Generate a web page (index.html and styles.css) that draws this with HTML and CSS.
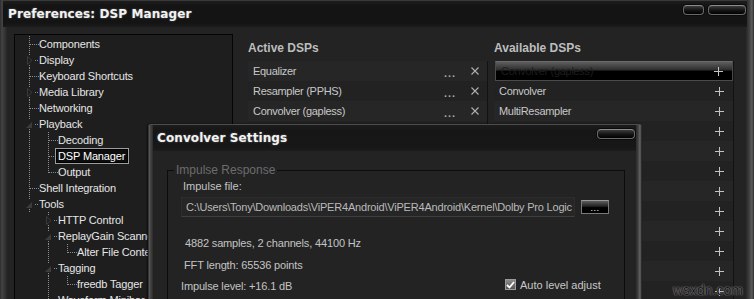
FILE: index.html
```html
<!DOCTYPE html>
<html lang="en">
<head>
  <meta charset="UTF-8">
  <title>Preferences: DSP Manager</title>
  <link rel="stylesheet" href="styles.css">
</head>
<body>
  <div class="window">
    <div class="titlebar">
      <span class="title">Preferences: DSP Manager</span>
      <div class="caption-buttons">
        <span class="cap-btn small"></span>
        <span class="cap-btn wide"></span>
      </div>
    </div>

    <div class="main">
      <div class="tree">
        <div class="node"><span class="g t"></span><span class="label">Components</span></div>
        <div class="node"><span class="g x"><svg class="closed" width="6" height="9" viewBox="0 0 6 9"><path d="M0.5 0.5L5 4.5L0.5 8.5Z" fill="none" stroke="#3a3a3a"/></svg></span><span class="label">Display</span></div>
        <div class="node"><span class="g t"></span><span class="label">Keyboard Shortcuts</span></div>
        <div class="node"><span class="g x"><svg class="closed" width="6" height="9" viewBox="0 0 6 9"><path d="M0.5 0.5L5 4.5L0.5 8.5Z" fill="none" stroke="#3a3a3a"/></svg></span><span class="label">Media Library</span></div>
        <div class="node"><span class="g t"></span><span class="label">Networking</span></div>
        <div class="node"><span class="g x"><svg class="open" width="6" height="6" viewBox="0 0 6 6"><path d="M6 0V6H0Z" fill="#3c3c3c"/></svg></span><span class="label">Playback</span></div>
        <div class="node"><span class="g v"></span><span class="g t"></span><span class="label">Decoding</span></div>
        <div class="node"><span class="g v"></span><span class="g t"></span><span class="label selected">DSP Manager</span></div>
        <div class="node"><span class="g v"></span><span class="g l"></span><span class="label">Output</span></div>
        <div class="node"><span class="g t"></span><span class="label">Shell Integration</span></div>
        <div class="node"><span class="g x"><svg class="open" width="6" height="6" viewBox="0 0 6 6"><path d="M6 0V6H0Z" fill="#3c3c3c"/></svg></span><span class="label">Tools</span></div>
        <div class="node"><span class="g"></span><span class="g x"><svg class="closed" width="6" height="9" viewBox="0 0 6 9"><path d="M0.5 0.5L5 4.5L0.5 8.5Z" fill="none" stroke="#3a3a3a"/></svg></span><span class="label">HTTP Control</span></div>
        <div class="node"><span class="g"></span><span class="g x"><svg class="open" width="6" height="6" viewBox="0 0 6 6"><path d="M6 0V6H0Z" fill="#3c3c3c"/></svg></span><span class="label">ReplayGain Scanner</span></div>
        <div class="node"><span class="g"></span><span class="g v"></span><span class="g l"></span><span class="label">Alter File Content</span></div>
        <div class="node"><span class="g"></span><span class="g x"><svg class="open" width="6" height="6" viewBox="0 0 6 6"><path d="M6 0V6H0Z" fill="#3c3c3c"/></svg></span><span class="label">Tagging</span></div>
        <div class="node"><span class="g"></span><span class="g v"></span><span class="g l"></span><span class="label">freedb Tagger</span></div>
        <div class="node"><span class="g"></span><span class="g t"></span><span class="label">Waveform Minibar</span></div>
      </div>

      <div class="dsp-panel">
        <div class="dsp-col">
          <h3>Active DSPs</h3>
          <div class="dsp-list">
            <div class="dsp-row"><span class="name">Equalizer</span><span class="dots">...</span><span class="remove"><svg width="8" height="8" viewBox="0 0 8 8"><path d="M0.5 0.5L7.5 7.5M7.5 0.5L0.5 7.5" stroke="#b0b0b0" stroke-width="1.1"/></svg></span></div>
            <div class="dsp-row"><span class="name">Resampler (PPHS)</span><span class="dots">...</span><span class="remove"><svg width="8" height="8" viewBox="0 0 8 8"><path d="M0.5 0.5L7.5 7.5M7.5 0.5L0.5 7.5" stroke="#b0b0b0" stroke-width="1.1"/></svg></span></div>
            <div class="dsp-row"><span class="name">Convolver (gapless)</span><span class="dots">...</span><span class="remove"><svg width="8" height="8" viewBox="0 0 8 8"><path d="M0.5 0.5L7.5 7.5M7.5 0.5L0.5 7.5" stroke="#b0b0b0" stroke-width="1.1"/></svg></span></div>
          </div>
        </div>
        <div class="dsp-col">
          <h3>Available DSPs</h3>
          <div class="dsp-list">
            <div class="dsp-row selected"><span class="name">Convolver (gapless)</span><span class="add"><svg width="9" height="9" viewBox="0 0 9 9"><path d="M4.5 0V9M0 4.5H9" stroke="#c4c4c4"/></svg></span></div>
            <div class="dsp-row"><span class="name">Convolver</span><span class="add"><svg width="9" height="9" viewBox="0 0 9 9"><path d="M4.5 0V9M0 4.5H9" stroke="#c4c4c4"/></svg></span></div>
            <div class="dsp-row"><span class="name">MultiResampler</span><span class="add"><svg width="9" height="9" viewBox="0 0 9 9"><path d="M4.5 0V9M0 4.5H9" stroke="#c4c4c4"/></svg></span></div>
            <div class="dsp-row"><span class="name"></span><span class="add"><svg width="9" height="9" viewBox="0 0 9 9"><path d="M4.5 0V9M0 4.5H9" stroke="#c4c4c4"/></svg></span></div>
            <div class="dsp-row"><span class="name"></span><span class="add"><svg width="9" height="9" viewBox="0 0 9 9"><path d="M4.5 0V9M0 4.5H9" stroke="#c4c4c4"/></svg></span></div>
            <div class="dsp-row"><span class="name"></span><span class="add"><svg width="9" height="9" viewBox="0 0 9 9"><path d="M4.5 0V9M0 4.5H9" stroke="#c4c4c4"/></svg></span></div>
            <div class="dsp-row"><span class="name"></span><span class="add"><svg width="9" height="9" viewBox="0 0 9 9"><path d="M4.5 0V9M0 4.5H9" stroke="#c4c4c4"/></svg></span></div>
            <div class="dsp-row"><span class="name"></span><span class="add"><svg width="9" height="9" viewBox="0 0 9 9"><path d="M4.5 0V9M0 4.5H9" stroke="#c4c4c4"/></svg></span></div>
            <div class="dsp-row"><span class="name"></span><span class="add"><svg width="9" height="9" viewBox="0 0 9 9"><path d="M4.5 0V9M0 4.5H9" stroke="#c4c4c4"/></svg></span></div>
            <div class="dsp-row"><span class="name"></span><span class="add"><svg width="9" height="9" viewBox="0 0 9 9"><path d="M4.5 0V9M0 4.5H9" stroke="#c4c4c4"/></svg></span></div>
            <div class="dsp-row"><span class="name"></span><span class="add"><svg width="9" height="9" viewBox="0 0 9 9"><path d="M4.5 0V9M0 4.5H9" stroke="#c4c4c4"/></svg></span></div>
            <div class="dsp-row"><span class="name"></span><span class="add"><svg width="9" height="9" viewBox="0 0 9 9"><path d="M4.5 0V9M0 4.5H9" stroke="#c4c4c4"/></svg></span></div>
          </div>
        </div>
      </div>
    </div>
  </div>

  <!-- floating settings dialog -->
  <div class="dialog">
    <div class="dialog-title">
      <span class="title">Convolver Settings</span>
      <span class="cap-btn wide"></span>
    </div>
    <div class="dialog-body">
      <fieldset class="group">
        <legend>Impulse Response</legend>
        <div class="field-label">Impulse file:</div>
        <div class="path-row">
          <div class="path-box">C:\Users\Tony\Downloads\ViPER4Android\ViPER4Android\Kernel\Dolby Pro Logic</div>
          <span class="browse">...</span>
        </div>
        <div class="info samples">4882 samples, 2 channels, 44100 Hz</div>
        <div class="info fft">FFT length: 65536 points</div>
        <div class="level-row">
          <span class="info level">Impulse level: +16.1 dB</span>
          <label class="check">
            <span class="box"><svg width="9" height="8" viewBox="0 0 9 8"><path d="M1 4L3.5 6.5L8 1" fill="none" stroke="#fff" stroke-width="1.8"/></svg></span>
            Auto level adjust
          </label>
        </div>
      </fieldset>
    </div>
  </div>

  <div class="watermark">wsxdn.com</div>
</body>
</html>
```

FILE: styles.css
```css
* { box-sizing: border-box; }

:root {
  --dv: repeating-linear-gradient(to bottom, #8c8c8c 0 1px, transparent 1px 2px);
  --dh: repeating-linear-gradient(to right, #8c8c8c 0 1px, transparent 1px 2px);
}

body {
  margin: 0;
  width: 754px;
  height: 299px;
  overflow: hidden;
  position: relative;
  background: #232323;
  font-family: "Liberation Sans", Arial, sans-serif;
  font-size: 11px;
  color: #d8d8d8;
}

.window {
  height: 299px;
  display: flex;
  flex-direction: column;
  background:
    linear-gradient(to right, #2c2c2c, #444 2px, #323232 5px, #262626 7px) left top / 7px 100% no-repeat,
    linear-gradient(to left, #2a2a2a, #5c5c5c 2px, #3c3c3c 5px, #272727 8px) right top / 8px 100% no-repeat,
    #232323;
}

.titlebar {
  flex: none;
  height: 27px;
  margin: 0 7px 0 3px;
  padding: 0 1px 0 5px;
  border-top: 1px solid #3a3a3a;
  background: linear-gradient(#1d1d1d, #141414 5px, #141414 22px, #1b1b1b);
  display: flex;
  justify-content: space-between;
  align-items: flex-start;
}

.title {
  font-family: "DejaVu Sans", sans-serif;
  font-weight: bold;
  font-size: 12px;
  line-height: 16px;
  padding-top: 5px;
  color: #f2f2f2;
  text-shadow: 0 0 2px rgba(255, 255, 255, 0.35);
  letter-spacing: 0.1px;
}

.caption-buttons {
  display: flex;
  gap: 4px;
  margin-top: 4px;
}

.cap-btn {
  display: block;
  height: 10px;
  border: 1px solid #6a6a6a;
  border-top-color: #8c8c8c;
  border-radius: 4px;
  background: linear-gradient(#3c3c3c, #161616 50%, #000);
  box-shadow: 0 0 0 1px #0b0b0b;
}
.cap-btn.small { width: 21px; }
.cap-btn.wide { width: 38px; }

.main {
  flex: 1;
  display: flex;
  padding: 7px 0 0 14px;
  min-height: 0;
}

/* preferences tree */
.tree {
  width: 219px;
  flex: none;
  border: 1px solid #050505;
  border-bottom: none;
  background: #1e1e1e;
  padding: 1px 0 0 5px;
  overflow: hidden;
  color: #e6e6e6;
  letter-spacing: -0.15px;
}

.node {
  display: flex;
  height: 16px;
  align-items: center;
}

.g {
  width: 19px;
  height: 16px;
  flex: none;
  display: flex;
  align-items: center;
  background-repeat: no-repeat;
}
.g.v {
  background-image: var(--dv);
  background-size: 1px 16px;
  background-position: 9px 0;
}
.g.t {
  background-image: var(--dv), var(--dh);
  background-size: 1px 16px, 9px 1px;
  background-position: 9px 0, 10px 8px;
}
.g.l {
  background-image: var(--dv), var(--dh);
  background-size: 1px 9px, 9px 1px;
  background-position: 9px 0, 10px 8px;
}
.g.x {
  background-image: var(--dv), var(--dv), var(--dh);
  background-size: 1px 3px, 1px 3px, 3px 1px;
  background-position: 9px 0, 9px 13px, 15px 8px;
}
.g .closed { margin-left: 7px; }
.g .open { margin-left: 6px; margin-top: 1px; }

.label {
  line-height: 16px;
  white-space: nowrap;
}
.label.selected {
  margin-left: -3px;
  padding: 0 3px 0 2px;
  line-height: 14px;
  height: 16px;
  border: 1px solid #9c9c9c;
  background: #0d0d0d;
  box-shadow: inset 0 0 0 1px #000;
  color: #fff;
}

/* DSP lists */
.dsp-panel {
  flex: 1;
  display: flex;
  gap: 6px;
  margin-left: 15px;
  padding-top: 7px;
}

.dsp-col {
  width: 240px;
  display: flex;
  flex-direction: column;
}

.dsp-col h3 {
  margin: 0 0 6px;
  font-size: 12px;
  line-height: 14px;
  color: #bdbdbd;
}

.dsp-list {
  flex: 1;
  border-right: 1px solid #121212;
  background: #222;
}

.dsp-row {
  height: 20px;
  display: flex;
  align-items: center;
  padding: 0 8px 0 5px;
  color: #c8c8c8;
  letter-spacing: -0.3px;
  white-space: nowrap;
}
.dsp-row:nth-child(odd) { background: #262626; }

.dsp-row .name { flex: 1; overflow: hidden; }

.dots {
  width: 12px;
  margin-right: 15px;
  color: #a8a8a8;
  font-weight: bold;
  letter-spacing: 1px;
  line-height: 11px;
  padding-top: 5px;
}
.remove svg, .add svg { display: block; }

.dsp-row .add { margin-right: 1px; }

.dsp-row.selected {
  margin-left: 1px;
  border: 1px solid #4a4a4a;
  border-top-color: #6a6a6a;
  background: linear-gradient(#5e5e5e, #2c2c2c 45%, #000 50%, #000);
  color: #1e1e1e;
}

/* Convolver settings dialog */
.dialog {
  position: absolute;
  left: 148px;
  top: 124px;
  width: 494px;
  display: flex;
  flex-direction: column;
  border-top: 1px solid #4c4c4c;
  border-radius: 3px 3px 0 0;
  background:
    linear-gradient(to right, #111, #5a5a5a 1px, #3e3e3e 3px, #2a2a2a 5px) left top / 5px 100% no-repeat,
    linear-gradient(to left, #1a1a1a, #666 2px, #3e3e3e 4px, #2a2a2a 6px) right top / 6px 100% no-repeat,
    #232323;
  box-shadow: -1px 0 2px rgba(0, 0, 0, 0.6);
}

.dialog-title {
  flex: none;
  height: 26px;
  margin: 0 6px 0 5px;
  padding: 0 1px 0 4px;
  display: flex;
  justify-content: space-between;
  align-items: flex-start;
  background: linear-gradient(#1c1c1c, #161616 6px, #171717 22px, #1c1c1c);
}
.dialog-title .cap-btn { margin-top: 4px; }

.dialog-body {
  padding: 12px 17px 0 19px;
}

.group {
  margin: 0;
  height: 150px;
  border: 1px solid #0c0c0c;
  padding: 0 0 0 13px;
  min-width: 0;
  color: #c4c4c4;
}

.group legend {
  margin-left: -7px;
  padding: 0 2px;
  font-size: 12px;
  line-height: 15px;
  color: #6c6c6c;
}

.field-label {
  line-height: 14px;
  margin: 1px 0 0 2px;
}

.path-row {
  display: flex;
  align-items: center;
  margin-top: 4px;
}

.path-box {
  width: 394px;
  height: 20px;
  line-height: 18px;
  padding-left: 4px;
  border: 1px solid #2c2c2c;
  border-bottom-color: #3e3e3e;
  background: #262626;
  color: #bababa;
  white-space: nowrap;
  overflow: hidden;
  letter-spacing: -0.2px;
}

.browse {
  width: 28px;
  height: 14px;
  margin-left: 6px;
  border: 1px solid #7a7a7a;
  border-top-color: #9a9a9a;
  background: linear-gradient(#5e5e5e, #202020 45%, #000 55%, #000);
  color: #fff;
  font-size: 9px;
  line-height: 14px;
  text-align: center;
  letter-spacing: 0.5px;
}

.info {
  line-height: 14px;
  letter-spacing: -0.15px;
}
.samples { margin: 19px 0 0 4px; }
.fft { margin: 8px 0 0 3px; }

.level-row {
  display: grid;
  grid-template-columns: 324px auto;
  margin-top: 7px;
}

.check {
  display: flex;
  align-items: center;
  gap: 4px;
  margin-top: -3px;
  line-height: 14px;
  color: #c8c8c8;
}

.check .box {
  width: 11px;
  height: 11px;
  display: flex;
  align-items: center;
  justify-content: center;
  border: 1px solid #9a9a9a;
  background: linear-gradient(#8a8a8a, #555);
}

.watermark {
  position: absolute;
  right: 11px;
  bottom: 1px;
  font-size: 14px;
  color: #161616;
  text-shadow: 0 0 1px #9a9a9a, 0 0 2px #777;
}
```
